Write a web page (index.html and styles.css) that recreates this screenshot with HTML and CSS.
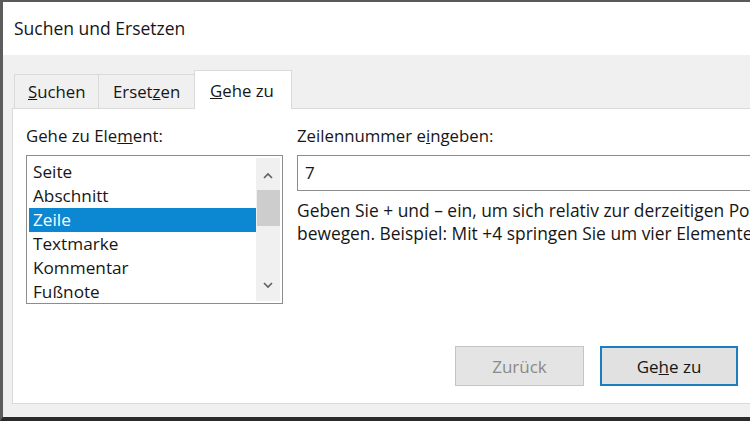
FILE: index.html
```html
<!DOCTYPE html>
<html lang="de">
<head>
<meta charset="UTF-8">
<meta name="viewport" content="width=device-width, initial-scale=1.0">
<title>Suchen und Ersetzen</title>
<link rel="stylesheet" href="styles.css">
</head>
<body>

<div class="dialog">
    <div class="titlebar">Suchen und Ersetzen</div>

    <div class="dialog-body">
        <div class="tabs">
            <div class="tab"><u>S</u>uchen</div>
            <div class="tab">Erset<u>z</u>en</div>
            <div class="tab active"><u>G</u>ehe zu</div>
        </div>

        <div class="panel">
            <div class="left-col">
                <div class="label">Gehe zu Ele<u>m</u>ent:</div>
                <div class="listbox">
                    <ul class="items">
                        <li>Seite</li>
                        <li>Abschnitt</li>
                        <li class="selected">Zeile</li>
                        <li>Textmarke</li>
                        <li>Kommentar</li>
                        <li>Fußnote</li>
                    </ul>
                    <div class="scrollbar">
                        <svg class="arrow" width="10" height="7" viewBox="0 0 10 7"><path d="M1 6 L5 2 L9 6" fill="none" stroke="#606060" stroke-width="1.6"/></svg>
                        <div class="thumb"></div>
                        <div class="track"></div>
                        <svg class="arrow" width="10" height="7" viewBox="0 0 10 7"><path d="M1 1 L5 5 L9 1" fill="none" stroke="#606060" stroke-width="1.6"/></svg>
                    </div>
                </div>
            </div>

            <div class="right-col">
                <div class="label">Zeilennummer e<u>i</u>ngeben:</div>
                <div class="textbox">7</div>
                <p class="hint">Geben Sie + und – ein, um sich relativ zur derzeitigen Position zu<br>bewegen. Beispiel: Mit +4 springen Sie um vier Elemente weiter.</p>

                <div class="buttons">
                    <button class="btn" disabled>Zurück</button>
                    <button class="btn default">Ge<u>h</u>e zu</button>
                </div>
            </div>
        </div>
    </div>
</div>

</body>
</html>
```

FILE: styles.css
```css
body {
    font-family: 'Open Sans', 'Noto Sans', sans-serif;
    margin: 0;
    padding: 0;
    overflow: hidden;
    color: #161616;
}

.dialog {
    width: 750px;
    height: 421px;
    box-sizing: border-box;
    border-top: 2px solid #5a5a5a;
    border-left: 3px solid #5c5c5c;
    border-bottom: 4px solid #2b2b2b;
    background-color: #f0f0f0;
    display: flex;
    flex-direction: column;
    overflow: hidden;
}

.titlebar {
    height: 53px;
    background-color: #ffffff;
    padding-left: 11px;
    font-size: 17.5px;
    line-height: 53px;
}

.dialog-body {
    flex: 1;
    display: flex;
    flex-direction: column;
    padding: 14px 0 13px 9px;
}

/* tab strip */
.tabs {
    display: flex;
    align-items: flex-end;
    height: 39px;
    padding-left: 2px;
}

.tab {
    height: 34px;
    box-sizing: border-box;
    padding: 0 13px;
    font-size: 16.8px;
    line-height: 34px;
    border: 1px solid #dadada;
    border-bottom: none;
    border-right: none;
    background-color: #f0f0f0;
}

.tab:first-child {
    width: 84px;
    padding-left: 13px;
}

.tab:nth-child(2) {
    width: 96px;
    padding-left: 14px;
}

.tab.active {
    height: 39px;
    width: 98px;
    line-height: 40px;
    padding-left: 15px;
    background-color: #ffffff;
    border-right: 1px solid #dadada;
    margin-bottom: -1px;
    position: relative;
}

.panel {
    flex: 1;
    display: flex;
    gap: 14px;
    background-color: #ffffff;
    border: 1px solid #dadada;
    border-right: none;
    padding: 16px 0 0 13px;
    overflow: hidden;
}

.label {
    font-size: 16.8px;
    line-height: 22px;
    height: 22px;
    margin-bottom: 8px;
}

.left-col {
    width: 257px;
    flex-shrink: 0;
}

/* list box */
.listbox {
    height: 149px;
    box-sizing: border-box;
    border: 1px solid #8d8d8d;
    display: flex;
}

.items {
    flex: 1;
    list-style: none;
    margin: 0;
    padding: 4px 0 0 2px;
}

.items li {
    height: 24px;
    line-height: 23px;
    font-size: 17.2px;
    padding-left: 4px;
}

.items li.selected {
    background-color: #0c88d2;
    color: #ffffff;
}

.scrollbar {
    width: 24px;
    margin: 2px 2px 2px 0;
    background-color: #f0f0f0;
    display: flex;
    flex-direction: column;
    align-items: center;
}

.arrow {
    margin: 14px 0 11px;
}

.arrow:last-child {
    margin: 0 0 12px;
}

.thumb {
    width: 23px;
    height: 36px;
    background-color: #cdcdcd;
}

.track {
    flex: 1;
}

/* right side */
.right-col {
    flex: 1;
    display: flex;
    flex-direction: column;
    min-width: 560px;
}

.textbox {
    width: 560px;
    height: 36px;
    box-sizing: border-box;
    border: 1px solid #8d8d8d;
    border-right: none;
    padding-left: 7px;
    font-size: 17px;
    line-height: 34px;
}

.hint {
    margin: 8px 0 0 0;
    font-size: 17.4px;
    line-height: 23px;
    white-space: nowrap;
}

.buttons {
    margin-top: auto;
    margin-bottom: 17px;
    padding-left: 158px;
    display: flex;
    gap: 16px;
}

.btn {
    height: 40px;
    box-sizing: border-box;
    font-family: inherit;
    font-size: 17px;
    color: #161616;
    background-color: #e1e1e1;
    border: 1px solid #adadad;
    padding: 0;
}

.btn[disabled] {
    width: 129px;
    color: #8a8a8a;
    background-color: #e4e4e4;
    border-color: #c4c4c4;
}

.btn.default {
    width: 138px;
    border: 2px solid #1a7fc0;
}
```
